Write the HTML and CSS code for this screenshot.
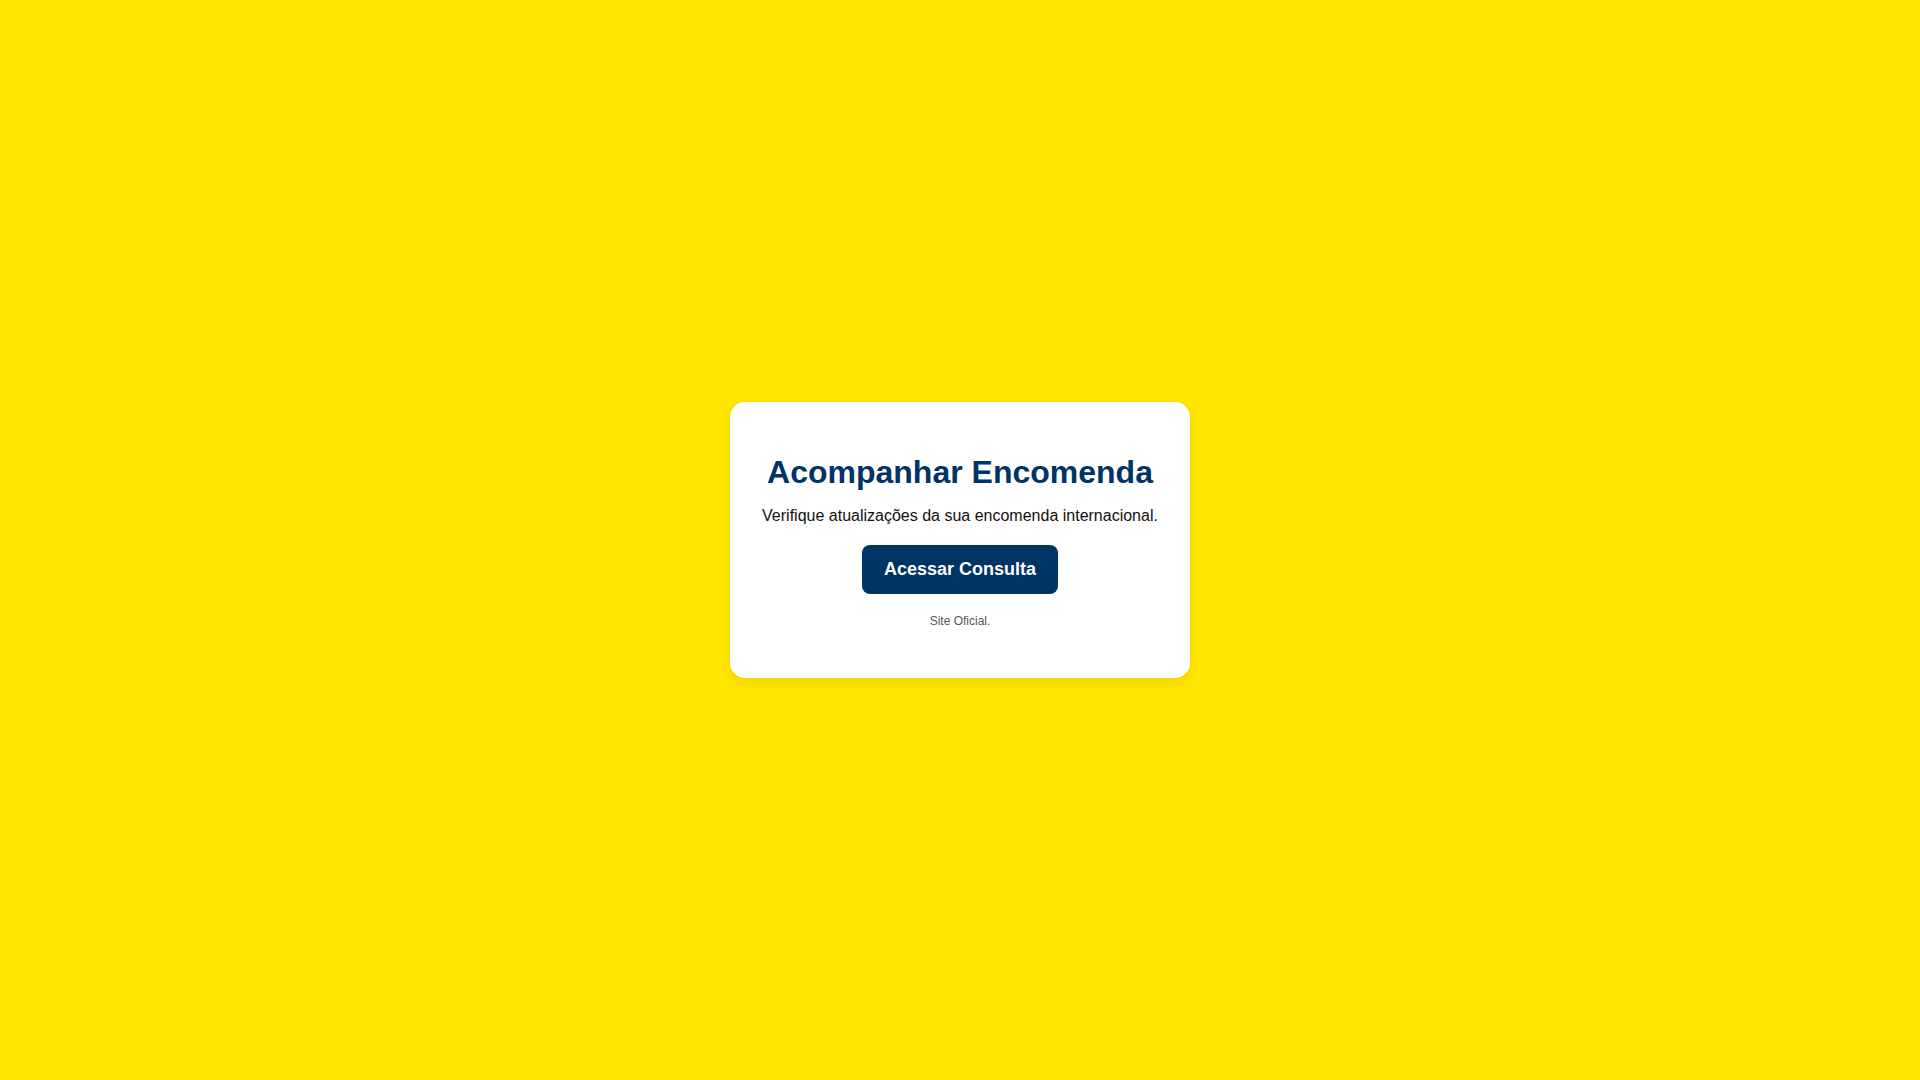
FILE: index.html
```html
<!DOCTYPE html>
<html lang="pt-BR">
<head>
<meta charset="utf-8">
<title>Acompanhar Encomenda</title>
<link rel="stylesheet" href="styles.css">
</head>
<body>
<main class="page">
  <section class="card">
    <h1 class="card-title">Acompanhar Encomenda</h1>
    <p class="card-text">Verifique atualizações da sua encomenda internacional.</p>
    <a class="card-button" href="#">Acessar Consulta</a>
    <p class="card-note">Site Oficial.</p>
  </section>
</main>
</body>
</html>
```

FILE: styles.css
```css
html, body {
  margin: 0;
  padding: 0;
  height: 100%;
}
body {
  background: #ffe600;
  font-family: "Liberation Sans", Arial, sans-serif;
}
.page {
  min-height: 100vh;
  display: flex;
  align-items: center;
  justify-content: center;
}
.card {
  width: 400px;
  padding: 30px;
  background: #ffffff;
  border-radius: 15px;
  box-shadow: 0 4px 12px rgba(0, 0, 0, 0.08);
  display: flex;
  flex-direction: column;
  align-items: center;
  text-align: center;
}
.card-title {
  margin: 22px 0 16px;
  font-size: 32px;
  font-weight: bold;
  color: #003366;
  line-height: normal;
}
.card-text {
  margin: 0 0 20px;
  font-size: 16px;
  color: #111111;
  line-height: normal;
}
.card-button {
  display: block;
  padding: 14px 22px;
  background: #003366;
  color: #ffffff;
  font-size: 18px;
  font-weight: bold;
  text-decoration: none;
  border-radius: 8px;
  line-height: normal;
}
.card-note {
  margin: 20px 0 20px;
  font-size: 12px;
  color: #555555;
  line-height: normal;
}
```
